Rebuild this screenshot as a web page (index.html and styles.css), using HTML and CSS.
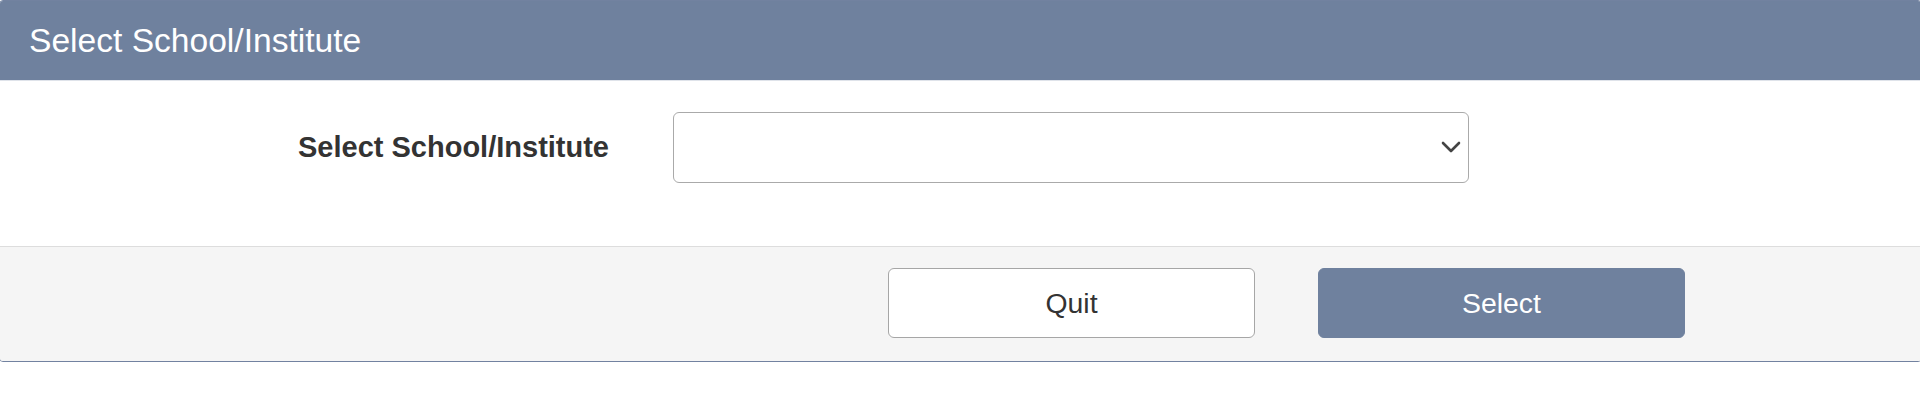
FILE: index.html
```html
<!DOCTYPE html>
<html lang="en">
<head>
<meta charset="utf-8">
<title>Select School/Institute</title>
<link rel="stylesheet" href="styles.css">
</head>
<body>
<div class="panel">
  <div class="panel-header">Select School/Institute</div>
  <div class="panel-body">
    <label class="field-label" for="school">Select School/Institute</label>
    <div class="select-wrap">
      <select id="school" class="select"><option value=""></option></select>
      <svg class="chevron" width="20" height="12" viewBox="0 0 20 12"><path d="M2 2 L10 10 L18 2" fill="none" stroke="#444" stroke-width="2.6" stroke-linecap="round" stroke-linejoin="round"/></svg>
    </div>
  </div>
  <div class="panel-footer">
    <button class="btn btn-quit" type="button">Quit</button>
    <button class="btn btn-select" type="button">Select</button>
  </div>
</div>
</body>
</html>
```

FILE: styles.css
```css
html, body {
  margin: 0;
  padding: 0;
  background: #ffffff;
  overflow: hidden;
}
body {
  font-family: "Liberation Sans", Arial, sans-serif;
}
.panel {
  box-sizing: border-box;
  width: calc(100% + 3px);
  margin-left: -1px;
  border: 1px solid #7282a0;
  border-radius: 4px;
  overflow: hidden;
}
.panel-header {
  background: #6f819e;
  color: #ffffff;
  font-size: 33.6px;
  height: 79px;
  line-height: 79px;
  padding-left: 29px;
  border-bottom: 1px solid #dfe3ea;
}
.panel-body {
  display: grid;
  grid-template-columns: 609px 796px;
  column-gap: 64px;
  padding: 31px 0 63px 0;
  align-items: center;
}
.field-label {
  text-align: right;
  font-weight: bold;
  font-size: 29px;
  color: #333333;
}
.select-wrap {
  position: relative;
  height: 71px;
}
.select {
  box-sizing: border-box;
  width: 100%;
  height: 71px;
  border: 1px solid #aaaaaa;
  border-radius: 6px;
  background: #ffffff;
  appearance: none;
  -webkit-appearance: none;
  font-size: 28px;
}
.chevron {
  position: absolute;
  right: 8px;
  top: 29px;
}
.panel-footer {
  background: #f5f5f5;
  border-top: 1px solid #dddddd;
  display: flex;
  gap: 63px;
  padding: 21px 0 23px 888px;
}
.btn {
  box-sizing: border-box;
  width: 367px;
  height: 70px;
  border-radius: 6px;
  font-family: "Liberation Sans", Arial, sans-serif;
  font-size: 28.4px;
  cursor: pointer;
}
.btn-quit {
  background: #ffffff;
  border: 1px solid #a6a6a6;
  color: #333333;
}
.btn-select {
  background: #6f819e;
  border: 1px solid #6f819e;
  color: #ffffff;
}
```
